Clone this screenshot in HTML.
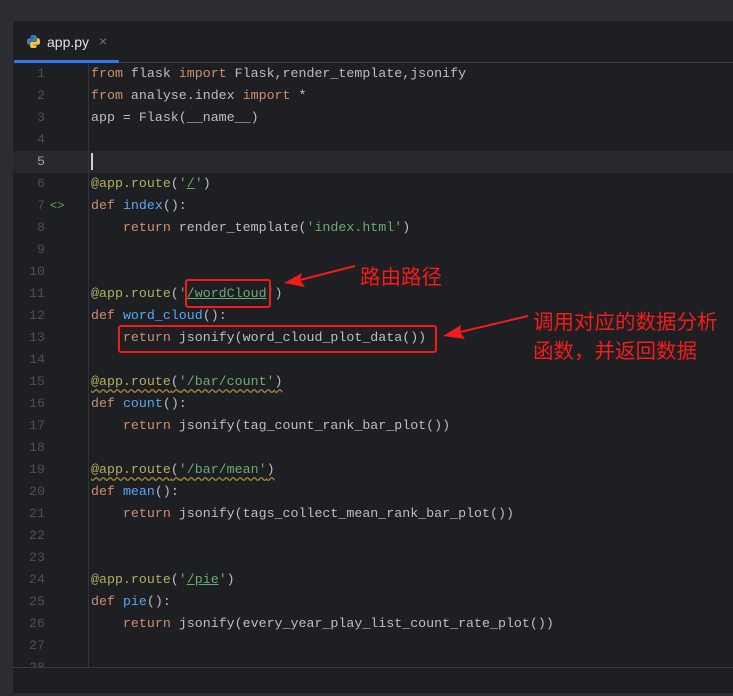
<!DOCTYPE html>
<html><head><meta charset="utf-8">
<style>
*{margin:0;padding:0;box-sizing:border-box}
body{width:733px;height:696px;background:#1e1f22;position:relative;overflow:hidden;font-family:"Liberation Mono",monospace;font-size:13.3px;color:#bcbec4}
.top{position:absolute;left:0;top:0;width:733px;height:21px;background:#2b2d30}
.left{position:absolute;left:0;top:21px;width:13px;height:675px;background:#2b2d30}
.tabsep{position:absolute;left:13px;top:62px;width:720px;height:1px;background:#393b40}
.tabline{position:absolute;left:14px;top:60px;width:105px;height:3px;background:#3574f0;border-radius:1px}
.tab{position:absolute;left:47px;top:34px;font-family:"Liberation Sans",sans-serif;font-size:14px;color:#dfe1e5}
.x{position:absolute;left:99px;top:33px;font-family:"Liberation Sans",sans-serif;font-size:14px;color:#6f737a}
.cur{position:absolute;left:13px;top:151px;width:720px;height:22px;background:#26282e}
.vline{position:absolute;left:88px;top:63px;width:1px;height:605px;background:#313438}
.bot{position:absolute;left:13px;top:667px;width:720px;height:1px;background:#393b40}
.bot2{position:absolute;left:0;top:693px;width:733px;height:3px;background:#2b2d30}
.ln{position:absolute;left:13px;width:32px;text-align:right;color:#4b5059;height:22px;line-height:22px}
.code{position:absolute;left:91px;height:22px;line-height:22px;white-space:pre}
.k{color:#cf8e6d}.f{color:#56a8f5}.s{color:#6aab73}.d{color:#b3ae60}
.u{text-decoration:underline}
.w{text-decoration:underline wavy #a08a3c;text-underline-offset:3px}
.box{position:absolute;border:2px solid #f51b1b;border-radius:3px}
.ann{position:absolute;color:#f51b1b;font-family:"Liberation Sans","Noto Sans CJK SC",sans-serif;font-size:20.5px;line-height:29px}
</style></head><body>
<div class="top"></div><div class="left"></div>
<svg style="position:absolute;left:26px;top:34px" width="15" height="15" viewBox="0 0 16 16"><path d="M7.8 1C4.5 1 4.7 2.4 4.7 2.4V4h3.2v.5H3.4S1 4.2 1 7.9s2 3.6 2 3.6h1.3V9.8s-.1-2 2-2h3.3s2 0 2-1.9V3s.3-2-3.8-2z" fill="#3d7ab8"/><path d="M8.2 15c3.3 0 3.1-1.4 3.1-1.4V12H8.1v-.5h4.5s2.4.3 2.4-3.4-2-3.6-2-3.6h-1.3v1.7s.1 2-2 2H6.4s-2 0-2 1.9V13s-.3 2 3.8 2z" fill="#f7c73c"/></svg>
<div class="tab">app.py</div><div class="x">×</div>
<div class="tabsep"></div><div class="tabline"></div>
<div class="cur"></div>
<div class="vline"></div>
<div class="bot"></div><div class="bot2"></div>

<div class="ln" style="top:63px">1</div><div class="code" style="top:63px"><span class="k">from</span> flask <span class="k">import</span> Flask,render_template,jsonify</div>
<div class="ln" style="top:85px">2</div><div class="code" style="top:85px"><span class="k">from</span> analyse.index <span class="k">import</span> *</div>
<div class="ln" style="top:107px">3</div><div class="code" style="top:107px">app = Flask(__name__)</div>
<div class="ln" style="top:129px">4</div>
<div class="ln" style="top:151px;color:#a1a3ab">5</div><div style="position:absolute;left:91px;top:153px;width:2px;height:17px;background:#ced0d6"></div>
<div class="ln" style="top:173px">6</div><div class="code" style="top:173px"><span class="d">@app.route</span>(<span class="s">'<span class="u">/</span>'</span>)</div>
<div class="ln" style="top:195px">7</div><div style="position:absolute;left:50px;top:195px;line-height:22px;color:#5fa35f;font-size:12px">&lt;&gt;</div><div class="code" style="top:195px"><span class="k">def</span> <span class="f">index</span>():</div>
<div class="ln" style="top:217px">8</div><div class="code" style="top:217px">    <span class="k">return</span> render_template(<span class="s">'index.html'</span>)</div>
<div class="ln" style="top:239px">9</div>
<div class="ln" style="top:261px">10</div>
<div class="ln" style="top:283px">11</div><div class="code" style="top:283px"><span class="d">@app.route</span>(<span class="s">'<span class="u">/wordCloud</span>'</span>)</div>
<div class="ln" style="top:305px">12</div><div class="code" style="top:305px"><span class="k">def</span> <span class="f">word_cloud</span>():</div>
<div class="ln" style="top:327px">13</div><div class="code" style="top:327px">    <span class="k">return</span> jsonify(word_cloud_plot_data())</div>
<div class="ln" style="top:349px">14</div>
<div class="ln" style="top:371px">15</div><div class="code" style="top:371px"><span class="w"><span class="d">@app.route</span>(<span class="s">'/bar/count'</span>)</span></div>
<div class="ln" style="top:393px">16</div><div class="code" style="top:393px"><span class="k">def</span> <span class="f">count</span>():</div>
<div class="ln" style="top:415px">17</div><div class="code" style="top:415px">    <span class="k">return</span> jsonify(tag_count_rank_bar_plot())</div>
<div class="ln" style="top:437px">18</div>
<div class="ln" style="top:459px">19</div><div class="code" style="top:459px"><span class="w"><span class="d">@app.route</span>(<span class="s">'/bar/mean'</span>)</span></div>
<div class="ln" style="top:481px">20</div><div class="code" style="top:481px"><span class="k">def</span> <span class="f">mean</span>():</div>
<div class="ln" style="top:503px">21</div><div class="code" style="top:503px">    <span class="k">return</span> jsonify(tags_collect_mean_rank_bar_plot())</div>
<div class="ln" style="top:525px">22</div>
<div class="ln" style="top:547px">23</div>
<div class="ln" style="top:569px">24</div><div class="code" style="top:569px"><span class="d">@app.route</span>(<span class="s">'<span class="u">/pie</span>'</span>)</div>
<div class="ln" style="top:591px">25</div><div class="code" style="top:591px"><span class="k">def</span> <span class="f">pie</span>():</div>
<div class="ln" style="top:613px">26</div><div class="code" style="top:613px">    <span class="k">return</span> jsonify(every_year_play_list_count_rate_plot())</div>
<div class="ln" style="top:635px">27</div>
<div class="ln" style="top:657px;height:10px;overflow:hidden">28</div>

<div class="box" style="left:185px;top:279px;width:86px;height:29px"></div>
<div class="box" style="left:118px;top:325px;width:319px;height:28px"></div>
<svg style="position:absolute;left:0;top:0" width="733" height="696">
<path d="M355 266 L300 280" stroke="#f51b1b" stroke-width="2" fill="none"/>
<path d="M284 283 L302 273 L300 280 L305 287 Z" fill="#f51b1b"/>
<path d="M528 316 L460 332" stroke="#f51b1b" stroke-width="2" fill="none"/>
<path d="M443 336 L461 325 L460 332 L465 339 Z" fill="#f51b1b"/>
</svg>
<div class="ann" style="left:360px;top:263px">路由路径</div>
<div class="ann" style="left:533px;top:308px">调用对应的数据分析</div>
<div class="ann" style="left:533px;top:337px">函数，并返回数据</div>
</body></html>
